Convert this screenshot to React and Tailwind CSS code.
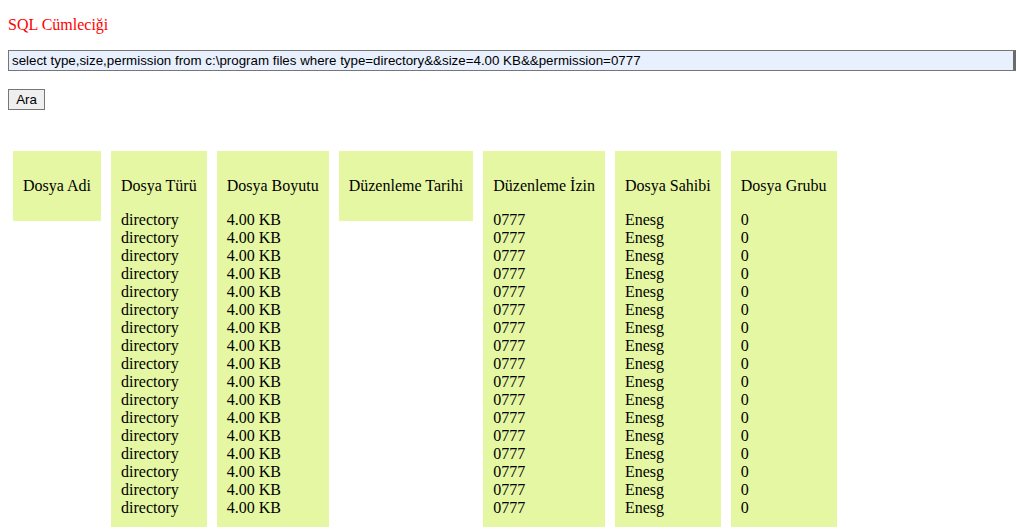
const columns = [
  { title: 'Dosya Adi', rows: [] },
  { title: 'Dosya Türü', rows: Array(17).fill('directory') },
  { title: 'Dosya Boyutu', rows: Array(17).fill('4.00 KB') },
  { title: 'Düzenleme Tarihi', rows: [] },
  { title: 'Düzenleme İzin', rows: Array(17).fill('0777') },
  { title: 'Dosya Sahibi', rows: Array(17).fill('Enesg') },
  { title: 'Dosya Grubu', rows: Array(17).fill('0') },
];

export default function App() {
  return (
    <div className="m-2 font-['Liberation_Serif',serif] text-base text-black">
      <p className="my-4 leading-[18px] text-[#ff0000]">SQL Cümleciği</p>

      <input
        type="text"
        readOnly
        value="select type,size,permission from c:\program files where type=directory&&size=4.00 KB&&permission=0777"
        className="block h-[21px] w-[1008px] border border-[#767676] border-r-[3px] border-r-[#6b6b6b] bg-[#e8f0fe] px-[3px] font-['Liberation_Sans',sans-serif] text-[13.33px] leading-[19px] text-black outline-none"
      />

      <button
        type="button"
        className="mt-[18px] block h-[21px] w-[37px] border border-[#767676] bg-[#efefef] font-['Liberation_Sans',sans-serif] text-[13.33px] leading-[19px] text-black"
      >
        Ara
      </button>

      <div className="mt-[36px] flex items-start">
        {columns.map((col) => (
          <div key={col.title} className="m-[5px] bg-[#e6f7a4] px-[10px] py-[10px]">
            <p className="my-4 leading-[18px] whitespace-nowrap">{col.title}</p>
            {col.rows.map((r, i) => (
              <div key={i} className="leading-[18px]">{r}</div>
            ))}
          </div>
        ))}
      </div>
    </div>
  );
}
